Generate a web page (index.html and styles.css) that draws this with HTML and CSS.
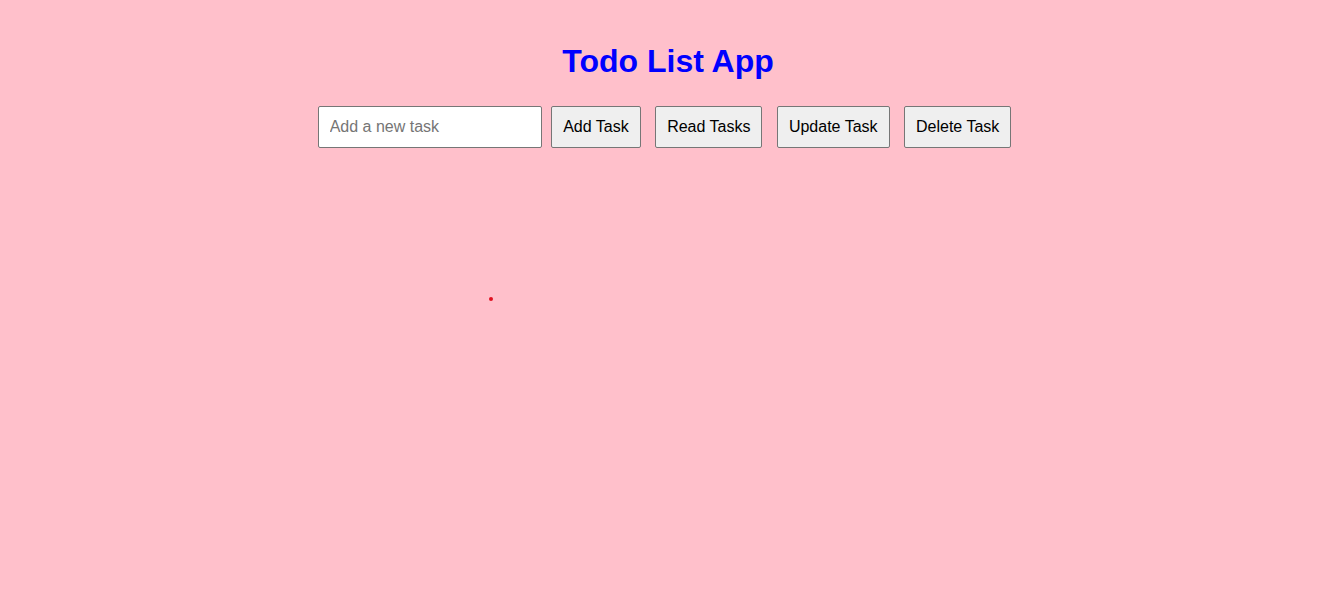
FILE: index.html
```html
<!DOCTYPE html>
<html>
<head>
<meta charset="utf-8">
<title>Todo List App</title>
<link rel="stylesheet" href="styles.css">
</head>
<body>
<div class="app">
  <h1 class="title">Todo List App</h1>
  <div class="controls">
    <input class="task-input" type="text" placeholder="Add a new task"> <button class="btn">Add Task</button> <button class="btn">Read Tasks</button> <button class="btn">Update Task</button> <button class="btn">Delete Task</button>
  </div>
  <div class="task-list">
    <span class="dot"></span>
  </div>
</div>
</body>
</html>
```

FILE: styles.css
```css
html, body {
  margin: 0;
  background: #ffc0cb;
}
body {
  padding: 20px;
  font-family: "Liberation Sans", Arial, sans-serif;
}
.app {
  text-align: center;
}
.title {
  margin: 23px 0 0;
  padding-right: 6px;
  font-size: 32px;
  line-height: 37px;
  font-weight: bold;
  color: #0000ff;
}
.controls {
  margin-top: 26px;
  font-size: 16px;
  line-height: 18px;
  margin-left: -8px;
}
.task-input {
  width: 200px;
  padding: 11px;
  font-size: 16px;
  line-height: 18px;
  font-family: "Liberation Sans", Arial, sans-serif;
  border: 1px solid #767676;
  border-radius: 2px;
  background: #fff;
  color: #000;
  vertical-align: middle;
  box-sizing: content-box;
  height: 18px;
  margin: 0;
}
.task-input::placeholder {
  color: #757575;
}
.btn {
  margin: 0 5px;
  padding: 11px 11px;
  font-size: 16px;
  line-height: 18px;
  font-family: "Liberation Sans", Arial, sans-serif;
  border: 1px solid #767676;
  border-radius: 2px;
  background: #efefef;
  color: #000;
  vertical-align: middle;
}
.task-list {
  text-align: left;
  padding-top: 149px;
  padding-left: 469px;
}
.dot {
  display: block;
  width: 4px;
  height: 4px;
  border-radius: 50%;
  background: #e01020;
}
```
